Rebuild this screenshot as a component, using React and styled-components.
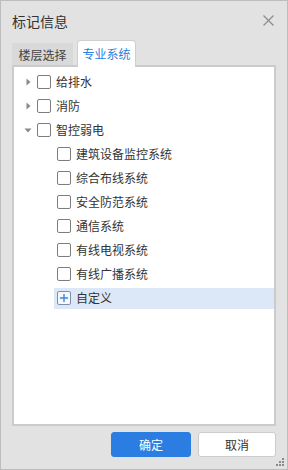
import React from 'react';
import styled, { createGlobalStyle, css } from 'styled-components';

const GlobalStyle = createGlobalStyle`
  html, body {
    margin: 0;
    padding: 0;
    background: #ffffff;
  }
  * {
    box-sizing: border-box;
  }
  body {
    font-family: "Noto Sans CJK SC", "Noto Sans", sans-serif;
  }
`;

const Window = styled.div`
  width: 288px;
  height: 470px;
  border: 1px solid #bdbdbd;
  background: #e2e2e2;
  display: flex;
  flex-direction: column;
  position: relative;
`;

const Header = styled.div`
  height: 39px;
  display: flex;
  align-items: center;
  justify-content: space-between;
  padding: 0 12px 0 11px;
`;

const Title = styled.div`
  font-size: 14px;
  color: #333333;
  line-height: 1;
`;

const CloseButton = styled.button`
  width: 14px;
  height: 14px;
  padding: 0;
  border: 0;
  background: none;
  display: flex;
  align-items: center;
  justify-content: center;
  cursor: pointer;
`;

const Tabs = styled.div`
  display: flex;
  align-items: flex-end;
  gap: 4px;
  margin: 0 11px;
  height: 25px;
  position: relative;
  z-index: 1;
`;

const Tab = styled.div`
  font-size: 12px;
  display: flex;
  align-items: center;
  justify-content: center;
  ${({ $active }) =>
    $active
      ? css`
          width: 59px;
          height: 27px;
          margin-bottom: -2px;
          padding-bottom: 2px;
          background: #ffffff;
          color: #2b7de1;
          border: 1px solid #cfcfcf;
          border-bottom: 0;
          border-radius: 4px 4px 0 0;
        `
      : css`
          width: 61px;
          height: 22px;
          background: #d9d9d9;
          color: #444444;
        `}
`;

const Panel = styled.div`
  margin: 0 11px;
  height: 361px;
  border: 2px solid #cbcbcb;
  background: #ffffff;
  padding-top: 3px;
`;

const Row = styled.div`
  height: 24px;
  display: flex;
  align-items: center;
`;

const Node = styled.div`
  height: 21px;
  flex: 1;
  display: flex;
  align-items: center;
  margin-left: ${({ $indent }) => $indent}px;
  padding-left: ${({ $pad }) => $pad}px;
  background: ${({ $selected }) => ($selected ? '#dce8f7' : 'transparent')};
`;

const Caret = styled.span`
  width: 16px;
  height: 16px;
  display: flex;
  align-items: center;
  justify-content: center;
`;

const Check = styled.span`
  width: 14px;
  height: 14px;
  border: 1px solid #7d7d7d;
  border-radius: 2px;
  background: #ffffff;
  margin-left: ${({ $offset }) => $offset || 0}px;
  flex-shrink: 0;
`;

const AddBox = styled.span`
  width: 14px;
  height: 14px;
  border: 1px solid #7c8ea8;
  border-radius: 2px;
  background: #f4f8fd;
  display: flex;
  align-items: center;
  justify-content: center;
  flex-shrink: 0;
`;

const Label = styled.span`
  margin-left: 5px;
  font-size: 12px;
  color: #333333;
  line-height: 1;
  white-space: nowrap;
`;

const Footer = styled.div`
  display: flex;
  justify-content: flex-end;
  gap: 7px;
  padding: 6px 11px 0 0;
`;

const Button = styled.button`
  height: 25px;
  width: ${({ $primary }) => ($primary ? 80 : 78)}px;
  border-radius: 3px;
  font-family: inherit;
  font-size: 12px;
  padding: 0;
  cursor: pointer;
  border: 1px solid ${({ $primary }) => ($primary ? '#2b7de1' : '#cccccc')};
  background: ${({ $primary }) => ($primary ? '#2b7de1' : '#ffffff')};
  color: ${({ $primary }) => ($primary ? '#ffffff' : '#333333')};
`;

const Grip = styled.svg`
  position: absolute;
  right: 3px;
  bottom: 3px;
`;

const CaretIcon = ({ open }) =>
  open ? (
    <svg width="8" height="5" viewBox="0 0 8 5">
      <path d="M0.5 0.5 L7.5 0.5 L4 4.5 Z" fill="#8a8a8a" />
    </svg>
  ) : (
    <svg width="5" height="8" viewBox="0 0 5 8">
      <path d="M0.5 0.5 L4.5 4 L0.5 7.5 Z" fill="#8a8a8a" />
    </svg>
  );

const topNodes = [
  { label: '给排水', open: false },
  { label: '消防', open: false },
  { label: '智控弱电', open: true },
];

const children = [
  '建筑设备监控系统',
  '综合布线系统',
  '安全防范系统',
  '通信系统',
  '有线电视系统',
  '有线广播系统',
];

const App = () => {
  return (
    <>
      <GlobalStyle />
      <Window>
        <Header>
          <Title>标记信息</Title>
          <CloseButton aria-label="关闭">
            <svg width="11" height="11" viewBox="0 0 11 11">
              <path d="M0.5 0.5 L10.5 10.5 M10.5 0.5 L0.5 10.5" stroke="#8c8c8c" strokeWidth="1.2" />
            </svg>
          </CloseButton>
        </Header>

        <Tabs>
          <Tab>楼层选择</Tab>
          <Tab $active>专业系统</Tab>
        </Tabs>

        <Panel>
          {topNodes.map((n) => (
            <Row key={n.label}>
              <Node $indent={6} $pad={0}>
                <Caret>
                  <CaretIcon open={n.open} />
                </Caret>
                <Check $offset={1} />
                <Label>{n.label}</Label>
              </Node>
            </Row>
          ))}
          {children.map((c) => (
            <Row key={c}>
              <Node $indent={40} $pad={3}>
                <Check />
                <Label>{c}</Label>
              </Node>
            </Row>
          ))}
          <Row>
            <Node $indent={40} $pad={3} $selected>
              <AddBox>
                <svg width="10" height="10" viewBox="0 0 10 10">
                  <path d="M5 1 V9 M1 5 H9" stroke="#3d86dc" strokeWidth="1.4" />
                </svg>
              </AddBox>
              <Label>自定义</Label>
            </Node>
          </Row>
        </Panel>

        <Footer>
          <Button $primary>确定</Button>
          <Button>取消</Button>
        </Footer>

        <Grip width="8" height="8" viewBox="0 0 8 8">
          <rect x="6" y="0" width="2" height="2" fill="#8a8a8a" />
          <rect x="3" y="3" width="2" height="2" fill="#8a8a8a" />
          <rect x="6" y="3" width="2" height="2" fill="#8a8a8a" />
          <rect x="0" y="6" width="2" height="2" fill="#8a8a8a" />
          <rect x="3" y="6" width="2" height="2" fill="#8a8a8a" />
          <rect x="6" y="6" width="2" height="2" fill="#8a8a8a" />
        </Grip>
      </Window>
    </>
  );
};

export default App;
